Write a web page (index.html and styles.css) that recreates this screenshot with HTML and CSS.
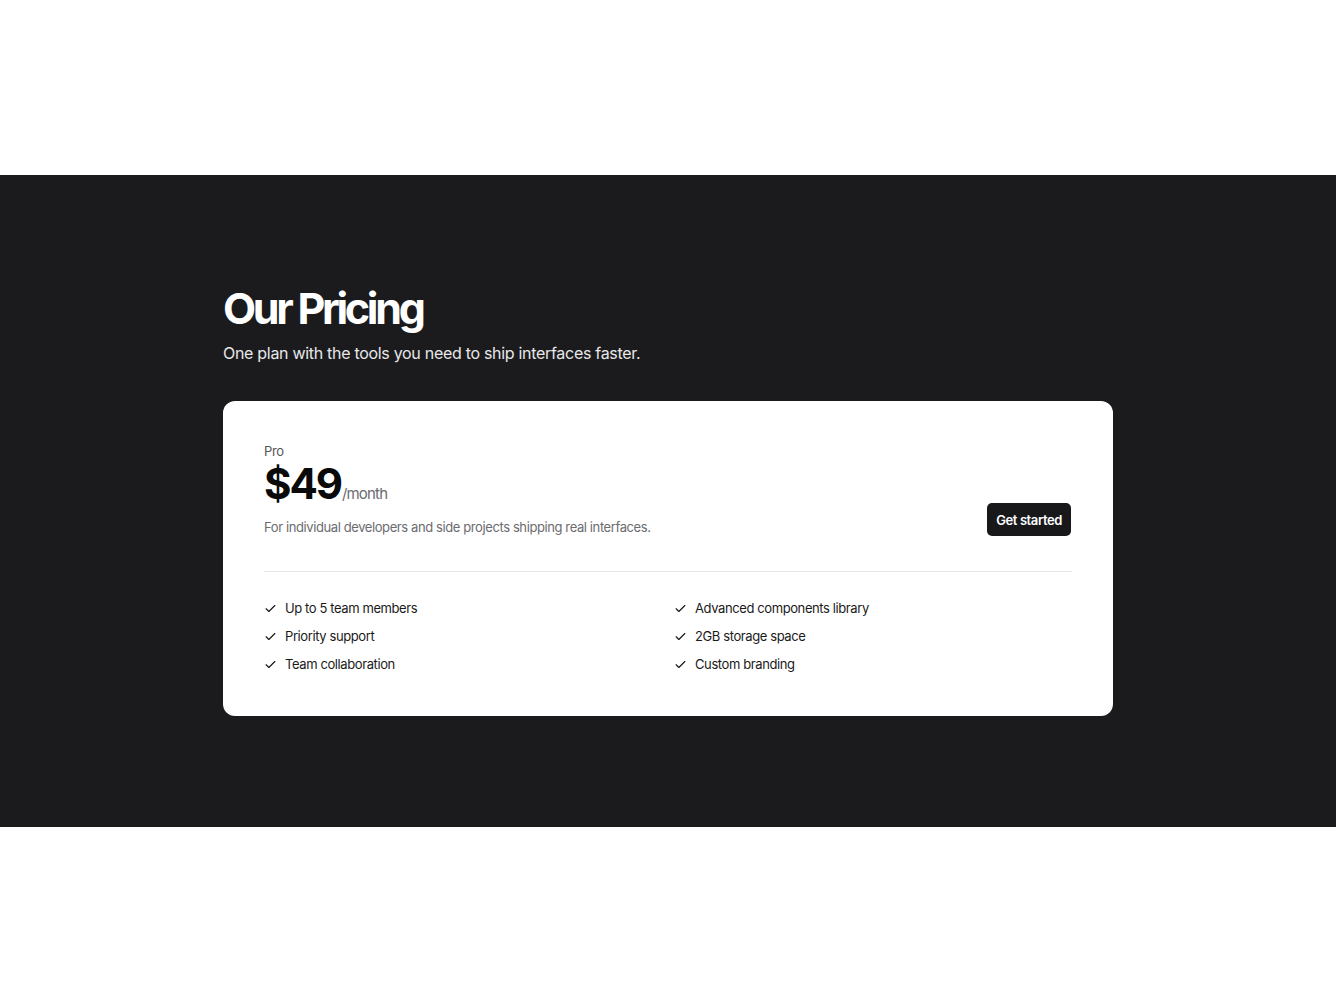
FILE: index.html
```html
<!DOCTYPE html>
<html>
<head>
    <link rel="stylesheet" href="styles.css">
</head>
<body>
    <div class="top_space"></div>

    <section class="pricing">
        <div class="pricing_inner">
            <h1 class="pricing_title">Our Pricing</h1>
            <p class="pricing_lead">One plan with the tools you need to ship interfaces faster.</p>

            <div class="plan_card">
                <div class="plan_head">
                    <div class="plan_info">
                        <div class="plan_name">Pro</div>
                        <div class="plan_price">
                            <span class="price_amount">$49</span><span class="price_period">/month</span>
                        </div>
                        <p class="plan_desc">For individual developers and side projects shipping real interfaces.</p>
                    </div>
                    <button class="plan_button">Get started</button>
                </div>

                <hr class="plan_divider">

                <ul class="plan_features">
                    <li><svg class="check" viewBox="0 0 24 24"><path d="M4 12.5l5 5L20 6.5"/></svg>Up to 5 team members</li>
                    <li><svg class="check" viewBox="0 0 24 24"><path d="M4 12.5l5 5L20 6.5"/></svg>Advanced components library</li>
                    <li><svg class="check" viewBox="0 0 24 24"><path d="M4 12.5l5 5L20 6.5"/></svg>Priority support</li>
                    <li><svg class="check" viewBox="0 0 24 24"><path d="M4 12.5l5 5L20 6.5"/></svg>2GB storage space</li>
                    <li><svg class="check" viewBox="0 0 24 24"><path d="M4 12.5l5 5L20 6.5"/></svg>Team collaboration</li>
                    <li><svg class="check" viewBox="0 0 24 24"><path d="M4 12.5l5 5L20 6.5"/></svg>Custom branding</li>
                </ul>
            </div>
        </div>
    </section>
</body>
</html>
```

FILE: styles.css
```css
/* Page basics */
body {
    margin: 0;
    font-family: Inter, "Noto Sans", Arial, sans-serif;
    background-color: #fff;
    color: #111;
}

.top_space {
    height: 175px;
}

/* Dark pricing band */
.pricing {
    background-color: #1b1b1d;
    padding: 111px 0 111px;
}

.pricing_inner {
    width: 890px;
    margin: 0 auto;
}

.pricing_title {
    margin: 0;
    font-size: 43px;
    line-height: 44px;
    font-weight: 700;
    letter-spacing: -3.3px;
    color: #fff;
}

.pricing_lead {
    margin: 11px 0 36px;
    font-size: 16px;
    line-height: 24px;
    letter-spacing: -0.3px;
    color: #e8e8ea;
}

/* Plan card */
.plan_card {
    background-color: #fff;
    border-radius: 12px;
    padding: 41px 41px 43px;
    letter-spacing: -0.4px;
}

.plan_head {
    display: flex;
    justify-content: space-between;
    align-items: flex-end;
}

.plan_name {
    font-size: 13px;
    line-height: 18px;
    color: #555;
}

.plan_price {
    display: flex;
    align-items: baseline;
    margin-top: 2px;
}

.price_amount {
    font-size: 42px;
    line-height: 44px;
    font-weight: 700;
    letter-spacing: -2.1px;
    color: #0a0a0a;
}

.price_period {
    font-size: 15px;
    letter-spacing: -0.8px;
    color: #6b6b70;
    margin-left: 1px;
}

.plan_desc {
    margin: 12px 0 0;
    font-size: 13px;
    line-height: 18px;
    color: #6b6b70;
}

.plan_button {
    font-family: inherit;
    font-size: 13px;
    font-weight: 600;
    letter-spacing: -0.4px;
    color: #fff;
    background-color: #18181b;
    border: none;
    border-radius: 5px;
    height: 33px;
    padding: 0 9px;
    margin-right: 1px;
    cursor: pointer;
}

.plan_divider {
    border: none;
    border-top: 1px solid #e6e6e8;
    margin: 35px 0 27px;
}

/* Feature list */
.plan_features {
    list-style: none;
    margin: 0;
    padding: 0;
    display: grid;
    grid-template-columns: 1fr 1fr;
    column-gap: 12px;
    row-gap: 10px;
}

.plan_features li {
    display: flex;
    align-items: center;
    gap: 8px;
    font-size: 13px;
    line-height: 18px;
    color: #1a1a1a;
}

.check {
    width: 13px;
    height: 13px;
    fill: none;
    stroke: #1a1a1a;
    stroke-width: 2.2;
    stroke-linecap: round;
    stroke-linejoin: round;
}
```
